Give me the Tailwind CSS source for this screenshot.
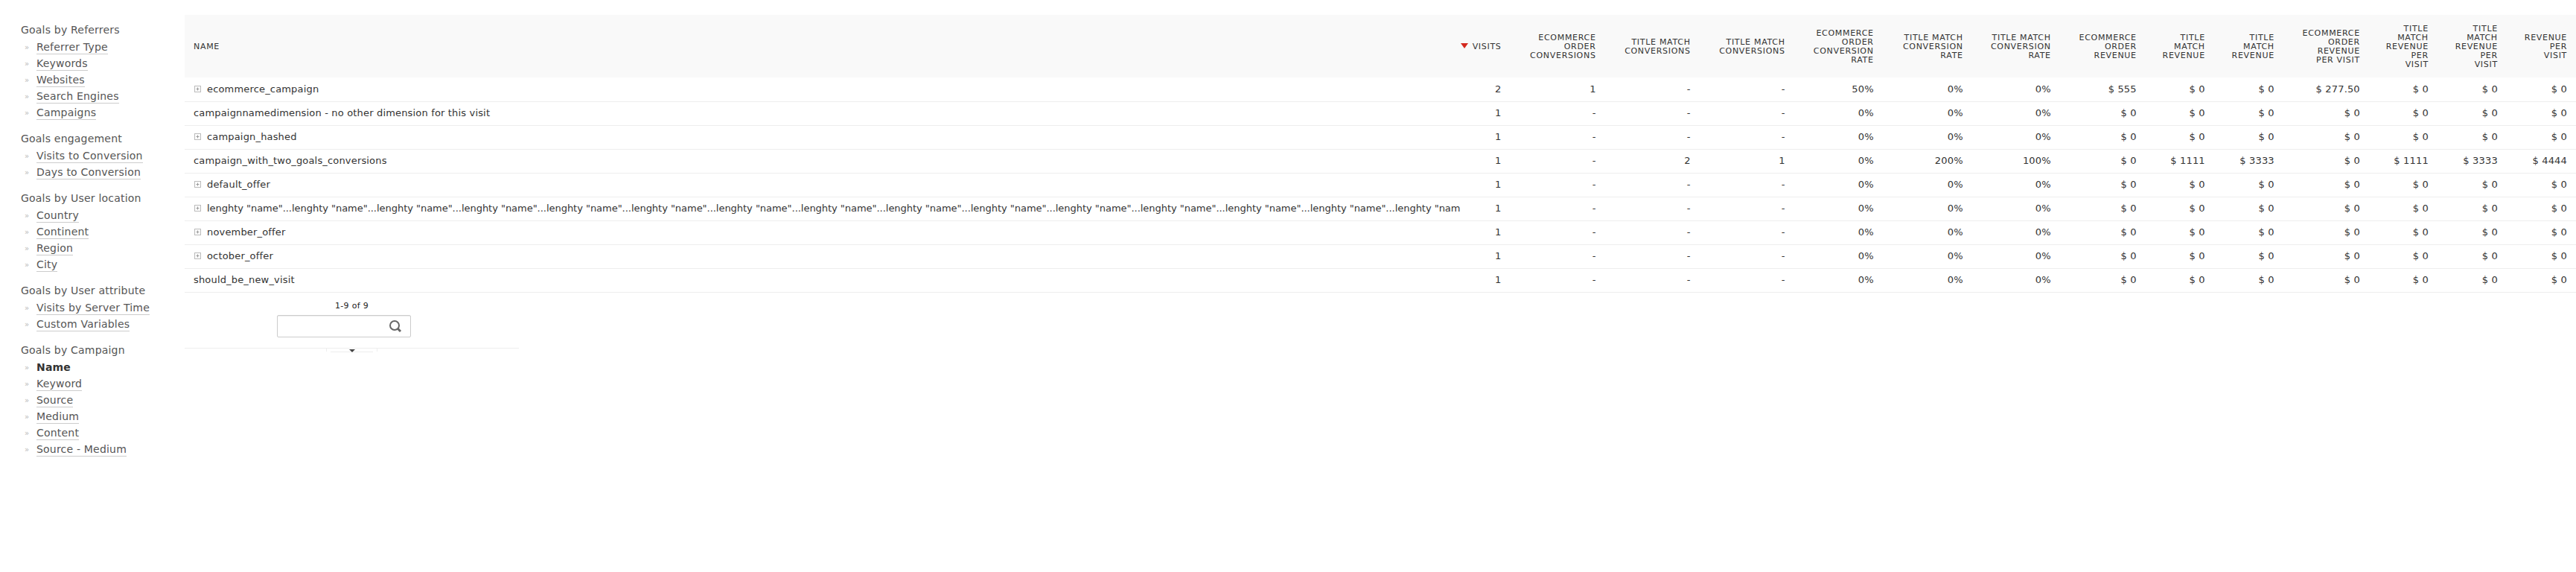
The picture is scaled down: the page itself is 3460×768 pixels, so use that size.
<!DOCTYPE html>
<html lang="en">
  <head>
    <meta charset="UTF-8" />
    <title>Goals by Campaign</title>
    <script src="https://cdn.jsdelivr.net/npm/@tailwindcss/browser@4"></script>
  </head>
  <body class="bg-white font-['DejaVu_Sans',sans-serif]">
    <div class="flex w-[3460px] h-[768px] overflow-hidden">
      <!-- Report menu -->
      <nav class="w-[248px] shrink-0 pl-[28px] pt-[29px] text-[14px] tracking-[0.2px] leading-[22px] text-[#555]">
        <h3 class="text-[#555] mb-[2px]">Goals by Referrers</h3>
        <ul class="mb-[12px]">
          <li class="flex h-[22px]"><span class="w-[21px] pl-[5px] text-[10px] text-[#bbb]">»</span><a class="border-b border-[#ccc] h-[20px] leading-[20px]">Referrer Type</a></li>
          <li class="flex h-[22px]"><span class="w-[21px] pl-[5px] text-[10px] text-[#bbb]">»</span><a class="border-b border-[#ccc] h-[20px] leading-[20px]">Keywords</a></li>
          <li class="flex h-[22px]"><span class="w-[21px] pl-[5px] text-[10px] text-[#bbb]">»</span><a class="border-b border-[#ccc] h-[20px] leading-[20px]">Websites</a></li>
          <li class="flex h-[22px]"><span class="w-[21px] pl-[5px] text-[10px] text-[#bbb]">»</span><a class="border-b border-[#ccc] h-[20px] leading-[20px]">Search Engines</a></li>
          <li class="flex h-[22px]"><span class="w-[21px] pl-[5px] text-[10px] text-[#bbb]">»</span><a class="border-b border-[#ccc] h-[20px] leading-[20px]">Campaigns</a></li>
        </ul>
        <h3 class="text-[#555] mb-[2px]">Goals engagement</h3>
        <ul class="mb-[12px]">
          <li class="flex h-[22px]"><span class="w-[21px] pl-[5px] text-[10px] text-[#bbb]">»</span><a class="border-b border-[#ccc] h-[20px] leading-[20px]">Visits to Conversion</a></li>
          <li class="flex h-[22px]"><span class="w-[21px] pl-[5px] text-[10px] text-[#bbb]">»</span><a class="border-b border-[#ccc] h-[20px] leading-[20px]">Days to Conversion</a></li>
        </ul>
        <h3 class="text-[#555] mb-[2px]">Goals by User location</h3>
        <ul class="mb-[12px]">
          <li class="flex h-[22px]"><span class="w-[21px] pl-[5px] text-[10px] text-[#bbb]">»</span><a class="border-b border-[#ccc] h-[20px] leading-[20px]">Country</a></li>
          <li class="flex h-[22px]"><span class="w-[21px] pl-[5px] text-[10px] text-[#bbb]">»</span><a class="border-b border-[#ccc] h-[20px] leading-[20px]">Continent</a></li>
          <li class="flex h-[22px]"><span class="w-[21px] pl-[5px] text-[10px] text-[#bbb]">»</span><a class="border-b border-[#ccc] h-[20px] leading-[20px]">Region</a></li>
          <li class="flex h-[22px]"><span class="w-[21px] pl-[5px] text-[10px] text-[#bbb]">»</span><a class="border-b border-[#ccc] h-[20px] leading-[20px]">City</a></li>
        </ul>
        <h3 class="text-[#555] mb-[2px]">Goals by User attribute</h3>
        <ul class="mb-[12px]">
          <li class="flex h-[22px]"><span class="w-[21px] pl-[5px] text-[10px] text-[#bbb]">»</span><a class="border-b border-[#ccc] h-[20px] leading-[20px]">Visits by Server Time</a></li>
          <li class="flex h-[22px]"><span class="w-[21px] pl-[5px] text-[10px] text-[#bbb]">»</span><a class="border-b border-[#ccc] h-[20px] leading-[20px]">Custom Variables</a></li>
        </ul>
        <h3 class="text-[#555] mb-[2px]">Goals by Campaign</h3>
        <ul>
          <li class="flex h-[22px]"><span class="w-[21px] pl-[5px] text-[10px] text-[#bbb]">»</span><a class="h-[20px] leading-[20px] font-bold text-[#333]">Name</a></li>
          <li class="flex h-[22px]"><span class="w-[21px] pl-[5px] text-[10px] text-[#bbb]">»</span><a class="border-b border-[#ccc] h-[20px] leading-[20px]">Keyword</a></li>
          <li class="flex h-[22px]"><span class="w-[21px] pl-[5px] text-[10px] text-[#bbb]">»</span><a class="border-b border-[#ccc] h-[20px] leading-[20px]">Source</a></li>
          <li class="flex h-[22px]"><span class="w-[21px] pl-[5px] text-[10px] text-[#bbb]">»</span><a class="border-b border-[#ccc] h-[20px] leading-[20px]">Medium</a></li>
          <li class="flex h-[22px]"><span class="w-[21px] pl-[5px] text-[10px] text-[#bbb]">»</span><a class="border-b border-[#ccc] h-[20px] leading-[20px]">Content</a></li>
          <li class="flex h-[22px]"><span class="w-[21px] pl-[5px] text-[10px] text-[#bbb]">»</span><a class="border-b border-[#ccc] h-[20px] leading-[20px]">Source - Medium</a></li>
        </ul>
      </nav>

      <!-- Report -->
      <main class="w-[3212px] pt-[20px]">
        <table id="report" class="table-fixed border-collapse w-[3212px] text-[13px] tracking-[0.17px] text-[#333]">
          <colgroup id="cols"></colgroup>
          <thead><tr id="headRow" class="h-[84px] bg-[#f9f9f9] text-[11px] tracking-[0.7px] leading-[12px] text-[#333] uppercase"></tr></thead>
          <tbody id="rows"></tbody>
        </table>

        <!-- Footer -->
        <div class="w-[449px] pt-[10px]">
          <p class="text-center text-[11px] tracking-[0.3px] leading-[16px] text-[#222]">1-9 of 9</p>
          <div class="mt-[4px] ml-[124px] w-[180px] h-[30px] border border-[#ccc] rounded-[2px] flex items-center justify-end pr-[11px] shadow-[inset_0_1px_1px_#eee]">
            <svg width="18" height="18" viewBox="0 0 18 18" fill="none" stroke="#666">
              <circle cx="8" cy="8" r="6" stroke-width="2" />
              <path d="M12.5 12.5l3.5 3.5" stroke-width="3" />
            </svg>
          </div>
          <div class="mt-[14px] h-[8px] border-t border-[#eee] flex justify-center">
            <div class="w-[69px] h-[4px] border-x border-[#eee]"></div>
          </div>
          <div class="flex justify-center -mt-[6px]">
            <div class="w-[57px] h-[4px] border-b border-[#eee] flex justify-center">
              <svg width="8" height="4" viewBox="0 0 8 4"><path d="M0 0h8L4 4z" fill="#444" /></svg>
            </div>
          </div>
        </div>
      </main>
    </div>

    <script>
      const widths = [1713, 67, 127, 127, 127, 119, 120, 118, 115, 92, 93, 115, 92, 93, 93];
      const heads = [
        "Name", "Visits", "Ecommerce<br>Order<br>Conversions", "Title Match<br>Conversions", "Title Match<br>Conversions",
        "Ecommerce<br>Order<br>Conversion<br>Rate", "Title Match<br>Conversion<br>Rate", "Title Match<br>Conversion<br>Rate",
        "Ecommerce<br>Order<br>Revenue", "Title<br>Match<br>Revenue", "Title<br>Match<br>Revenue",
        "Ecommerce<br>Order<br>Revenue<br>Per Visit", "Title<br>Match<br>Revenue<br>Per<br>Visit", "Title<br>Match<br>Revenue<br>Per<br>Visit", "Revenue<br>Per<br>Visit",
      ];
      const long = 'lenghty "name"...'.repeat(14) + 'lenghty "nam';
      const zero = ["1", "-", "-", "-", "0%", "0%", "0%", "$ 0", "$ 0", "$ 0", "$ 0", "$ 0", "$ 0", "$ 0"];
      const data = [
        ["ecommerce_campaign", true, ["2", "1", "-", "-", "50%", "0%", "0%", "$ 555", "$ 0", "$ 0", "$ 277.50", "$ 0", "$ 0", "$ 0"]],
        ["campaignnamedimension - no other dimension for this visit", false, zero],
        ["campaign_hashed", true, zero],
        ["campaign_with_two_goals_conversions", false, ["1", "-", "2", "1", "0%", "200%", "100%", "$ 0", "$ 1111", "$ 3333", "$ 0", "$ 1111", "$ 3333", "$ 4444"]],
        ["default_offer", true, zero],
        [long, true, zero],
        ["november_offer", true, zero],
        ["october_offer", true, zero],
        ["should_be_new_visit", false, zero],
      ];
      const plus = '<svg class="inline-block mr-[6px] align-[-2px]" width="12" height="12" viewBox="0 0 12 12" fill="none"><rect x="1.5" y="1.5" width="8" height="8" stroke="#bbb" /><path d="M3.5 5.5h4M5.5 3.5v4" stroke="#999" /></svg>';
      const arrow = '<svg class="inline-block mr-[6px] align-[1px]" width="10" height="7" viewBox="0 0 10 7"><path d="M0 0h10L5 7z" fill="#d4291f" /></svg>';

      document.getElementById("cols").innerHTML = widths.map((w) => `<col style="width:${w}px">`).join("");
      document.getElementById("headRow").innerHTML = heads.map((h, i) => {
        if (i === 0) return `<th class="font-normal text-left pl-[12px] pt-[2px]">${h}</th>`;
        return `<th class="font-normal text-right pr-[12px] pt-[2px] whitespace-nowrap">${i === 1 ? arrow : ""}${h}</th>`;
      }).join("");
      document.getElementById("rows").innerHTML = data.map(([name, sub, vals]) => `
        <tr class="h-[32px] border-b border-[#eee]">
          <td class="pl-[12px] overflow-hidden whitespace-nowrap ${name === long ? "tracking-[-0.03px]" : ""}">${sub ? plus : ""}${name.replace(/"/g, "&quot;")}</td>
          ${vals.map((v) => `<td class="text-right pr-[12px] whitespace-nowrap">${v}</td>`).join("")}
        </tr>`).join("");
    </script>
  </body>
</html>
